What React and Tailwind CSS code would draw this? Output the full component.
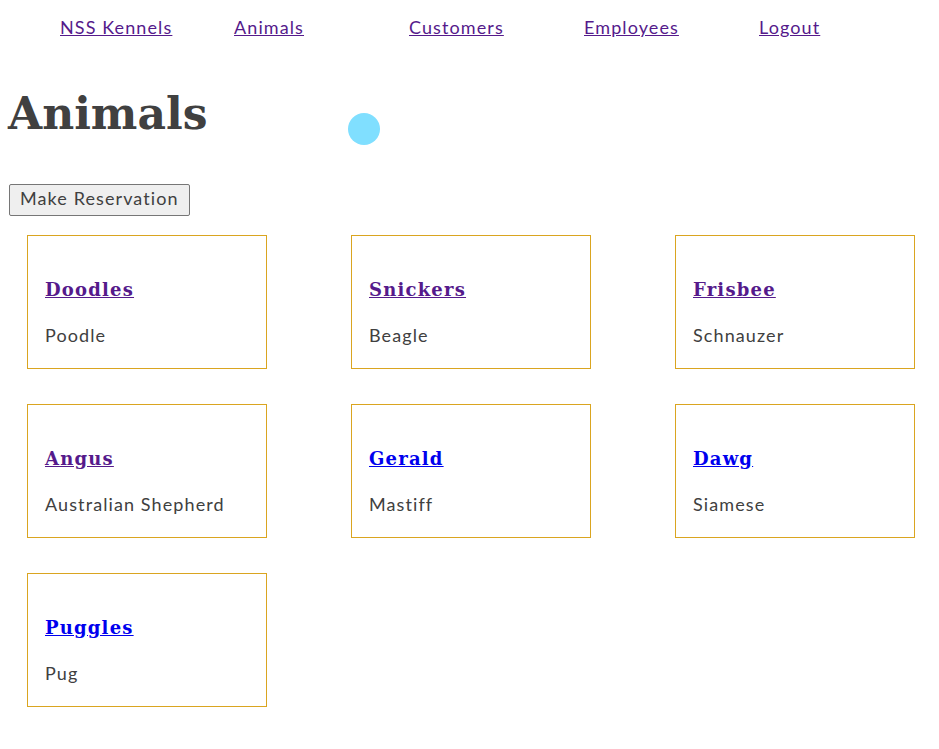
import React from 'react';

const navLinks = [
  { label: 'NSS Kennels', w: 'w-[174px]' },
  { label: 'Animals', w: 'w-[175px]' },
  { label: 'Customers', w: 'w-[175px]' },
  { label: 'Employees', w: 'w-[175px]' },
  { label: 'Logout', w: 'w-[100px]' },
];

const animals = [
  { name: 'Doodles', breed: 'Poodle', visited: true },
  { name: 'Snickers', breed: 'Beagle', visited: true },
  { name: 'Frisbee', breed: 'Schnauzer', visited: true },
  { name: 'Angus', breed: 'Australian Shepherd', visited: true },
  { name: 'Gerald', breed: 'Mastiff', visited: false },
  { name: 'Dawg', breed: 'Siamese', visited: false },
  { name: 'Puggles', breed: 'Pug', visited: false },
];

const body = "font-['Lato','Noto_Sans',sans-serif] tracking-[1.1px]";
const slab = "font-['DejaVu_Serif','Liberation_Serif',serif]";

function AnimalCard({ animal }) {
  return (
    <section className="w-[240px] h-[134px] border border-[#daa520] px-[17px] pt-[41px] box-border">
      <a
        href="#"
        className={`${slab} text-[18px] font-bold tracking-[1.2px] underline leading-[26px] ${
          animal.visited ? 'text-[#551a8b]' : 'text-[#0000ee]'
        }`}
      >
        {animal.name}
      </a>
      <div className={`${body} text-[18px] text-[#404040] mt-[21px] leading-[22px]`}>
        {animal.breed}
      </div>
    </section>
  );
}

export default function App() {
  return (
    <div className={`${body} bg-white min-h-[749px] text-[#404040]`}>
      <nav className="flex pl-[60px] pt-[15px] h-[40px]">
        {navLinks.map((l) => (
          <div key={l.label} className={l.w}>
            <a href="#" className="text-[18px] leading-[24px] text-[#551a8b] underline">
              {l.label}
            </a>
          </div>
        ))}
      </nav>

      <div className="flex items-center pl-[8px] mt-[38px] h-[72px]">
        <h1 className={`${slab} text-[44px] font-bold text-[#404040] leading-none tracking-normal w-[340px]`}>
          Animals
        </h1>
        <div className="w-8 h-8 rounded-full bg-[#80dfff] mt-[30px]" />
      </div>

      <button className="ml-[9px] mt-[34px] h-[32px] px-[10px] pb-[4px] border border-[#767676] rounded-[2px] bg-[#efefef] text-[18px] text-[#404040] leading-none">
        Make Reservation
      </button>

      <div className="grid grid-cols-[240px_240px_240px] gap-x-[84px] gap-y-[35px] pl-[27px] mt-[19px] pb-[40px]">
        {animals.map((a) => (
          <AnimalCard key={a.name} animal={a} />
        ))}
      </div>
    </div>
  );
}
